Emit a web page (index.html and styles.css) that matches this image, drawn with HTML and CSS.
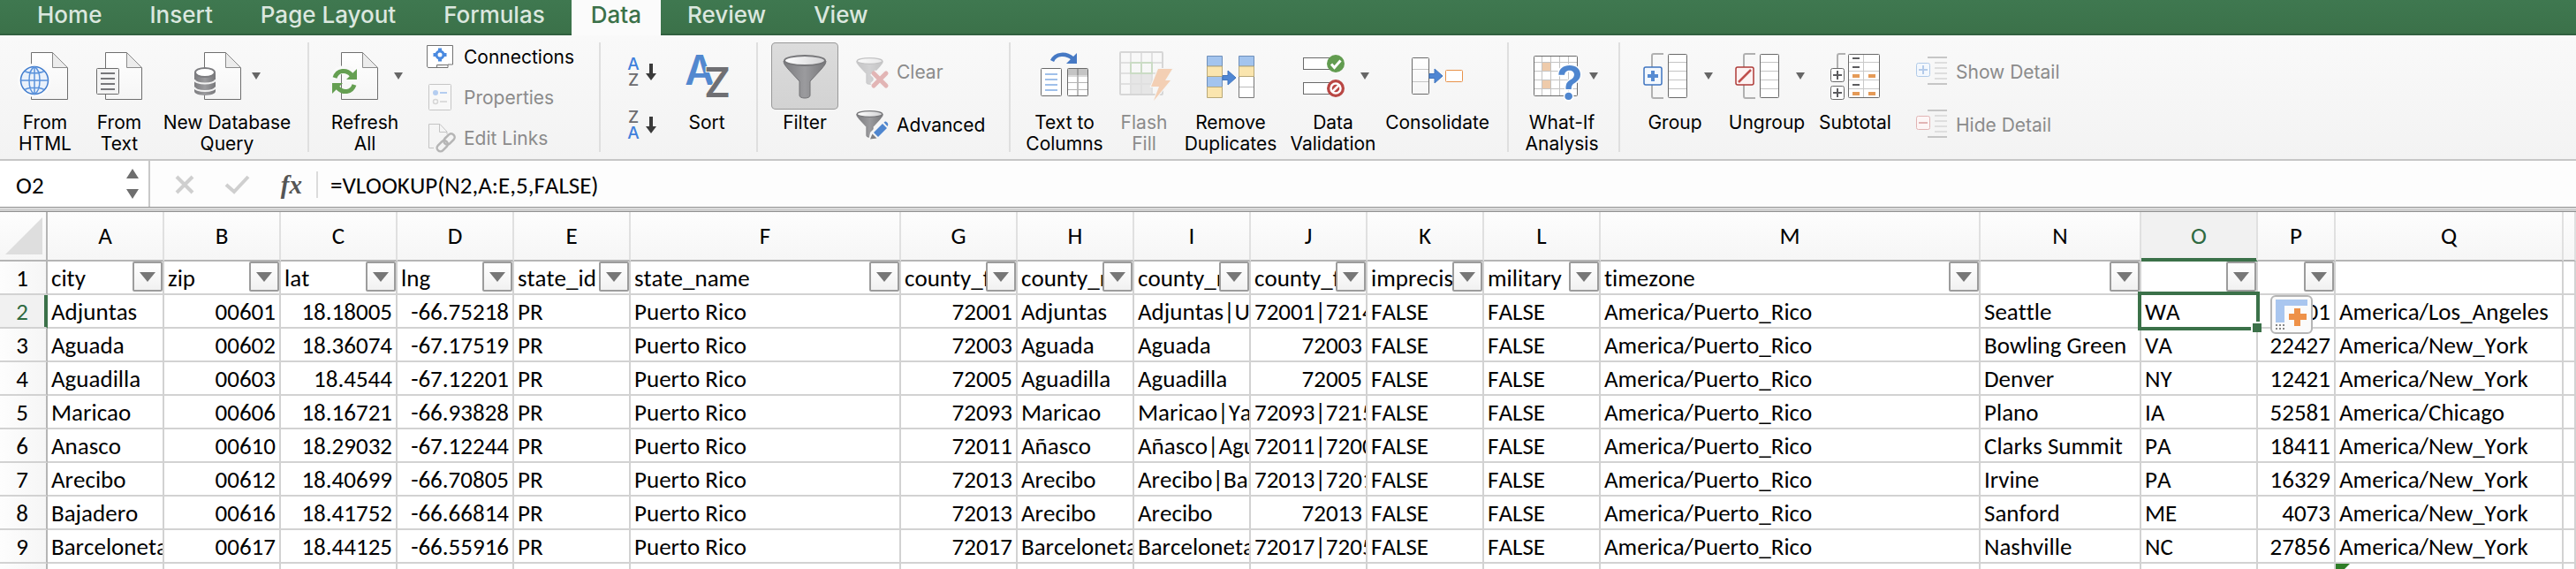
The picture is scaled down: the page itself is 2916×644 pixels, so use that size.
FILE: index.html
```html
<!DOCTYPE html>
<html lang="en">
<head>
<meta charset="utf-8">
<title>Workbook</title>
<link rel="stylesheet" href="styles.css">
</head>
<body>
<svg class="defs" aria-hidden="true">
  <defs>
    <linearGradient id="paper" x1="0" y1="0" x2="0" y2="1"><stop offset="0" stop-color="#fff"/><stop offset="1" stop-color="#f5f5f5"/></linearGradient>
    <linearGradient id="steel" x1="0" y1="0" x2="1" y2="0"><stop offset="0" stop-color="#7c7c7f"/><stop offset=".5" stop-color="#9b9b9e"/><stop offset="1" stop-color="#77777a"/></linearGradient>
    <linearGradient id="bowl" x1="0" y1="0" x2="1" y2="0"><stop offset="0" stop-color="#fff"/><stop offset="1" stop-color="#d2d2d4"/></linearGradient>
    <symbol id="page" viewBox="0 0 44 56" overflow="visible">
      <path d="M1.500 1.500H25.500L42.500 19V54.500H1.500Z" fill="url(#paper)" stroke="#6f6f6f"/>
      <path d="M25.500 1.500V18.500H42.500Z" fill="#ececec" stroke="#8a8a8a"/>
    </symbol>
    <symbol id="funnel" viewBox="0 0 50 52" overflow="visible">
      <path d="M1 8C1 12 4 14 6 17L19 31V47C19 51 31 51 31 47V31L44 17C46 14 49 12 49 8Z" fill="url(#steel)" stroke="#727275"/>
      <ellipse cx="25" cy="7.500" rx="23" ry="5.500" fill="url(#bowl)" stroke="#77777a" stroke-width="2"/>
    </symbol>
    <symbol id="arrow" viewBox="0 0 16 18" overflow="visible">
      <path d="M0 6.500H6V1L15 9L6 17V11.500H0Z" fill="#4f86d3" stroke="#3f74bf"/>
    </symbol>
  </defs>
</svg>

<nav class="tabs">
  <button class="tab">Home</button>
  <button class="tab">Insert</button>
  <button class="tab">Page Layout</button>
  <button class="tab">Formulas</button>
  <button class="tab tab-active">Data</button>
  <button class="tab">Review</button>
  <button class="tab">View</button>
</nav>

<div class="ribbon">
  <div class="group group-first">
    <button class="cmd w84">
      <span class="art"><svg width="60" height="76" viewBox="0 0 60 76">
        <use href="#page" x="13" y="10" width="44" height="56"/>
        <circle cx="18" cy="43" r="19" fill="#fafafa"/>
        <circle cx="18" cy="43" r="15.500" fill="#e9f1fb" stroke="#3f7bcd" stroke-width="1.500"/>
        <path d="M2.500 43H33.500M18 27.500V58.500M18 27.500C10 32 10 54 18 58.500C26 54 26 32 18 27.500M7 32.500C12 35.500 24 35.500 29 32.500M7 53.500C12 50.500 24 50.500 29 53.500" fill="none" stroke="#5b93dc" stroke-width="1.500"/>
      </svg></span>
      <span class="cap">From<br>HTML</span>
    </button>
    <button class="cmd w84">
      <span class="art"><svg width="60" height="76" viewBox="0 0 60 76">
        <use href="#page" x="13" y="10" width="44" height="56"/>
        <rect x="4.500" y="29.500" width="25" height="29" rx="1" fill="#f4f4f4" stroke="#6a6a6a"/>
        <path d="M9 35H25M9 41H25M9 47H25M9 53H25" stroke="#77777a" stroke-width="2"/>
      </svg></span>
      <span class="cap">From<br>Text</span>
    </button>
    <button class="cmd w160">
      <span class="art"><svg width="60" height="76" viewBox="0 0 60 76">
        <use href="#page" x="11" y="10" width="44" height="56"/>
        <path d="M1 34V55C1 61.500 25 61.500 25 55V34Z" fill="url(#steel)"/>
        <path d="M1 42C1 48 25 48 25 42M1 50.500C1 56.500 25 56.500 25 50.500" fill="none" stroke="#f2f2f2" stroke-width="2"/>
        <ellipse cx="13" cy="34" rx="11" ry="5" fill="#fff" stroke="#7d7d80" stroke-width="2"/>
      </svg><i class="drop"></i></span>
      <span class="cap">New Database<br>Query</span>
    </button>
  </div>

  <div class="group">
    <button class="cmd w100">
      <span class="art"><svg width="70" height="76" viewBox="0 0 70 76">
        <use href="#page" x="15" y="10" width="44" height="56"/>
        <path d="M8 41C10 29 24 28 30 36" fill="none" stroke="#fafafa" stroke-width="9"/>
        <path d="M9 40C12 31 22 30 28 37" fill="none" stroke="#659f52" stroke-width="5"/>
        <path d="M34 30V42H22Z" fill="#659f52"/>
        <path d="M31 48C28 57 18 58 12 51" fill="none" stroke="#659f52" stroke-width="5"/>
        <path d="M6 58V46H18Z" fill="#659f52"/>
      </svg><i class="drop"></i></span>
      <span class="cap">Refresh<br>All</span>
    </button>
    <div class="stack three">
      <button class="mini"><svg width="34" height="32" viewBox="0 0 34 32">
        <path d="M.5 3.500H29.500V25H24V28.500H1.500L.5 27Z" fill="#fff" stroke="#727272"/>
        <path d="M11.500 28V25.500H24" fill="#eee" stroke="#727272"/>
        <circle cx="15" cy="14" r="4" fill="#fff" stroke="#4a8ae0" stroke-width="3"/>
        <path d="M13 8H17M13 20H17M9 12V16M21 12V16" stroke="#4a8ae0" stroke-width="3"/>
      </svg>Connections</button>
      <button class="mini off" disabled><svg width="34" height="32" viewBox="0 0 34 32">
        <rect x="2.500" y="1.500" width="25" height="29" rx="1" fill="#f8f8f8" stroke="#c6c6c6"/>
        <circle cx="10" cy="11" r="3" fill="#b4cdf0"/><path d="M15 11H23" stroke="#b4cdf0" stroke-width="2"/>
        <circle cx="10" cy="21" r="2.500" fill="none" stroke="#d6d6d6" stroke-width="1.500"/><path d="M15 21H23" stroke="#dcdcdc" stroke-width="2"/>
      </svg>Properties</button>
      <button class="mini off" disabled><svg width="34" height="32" viewBox="0 0 34 32">
        <path d="M8 27.500H2.500V.5H15L23 9V12M14.500.5V9.500H23" fill="none" stroke="#c4c4c4"/>
        <g fill="none" stroke="#b5b5b5" stroke-width="2.500" transform="rotate(-45 22 21)"><rect x="9" y="17" width="14" height="8" rx="4"/><rect x="20" y="17" width="14" height="8" rx="4"/></g>
      </svg>Edit Links</button>
    </div>
  </div>

  <div class="group group-sort">
    <div class="stack two">
      <button class="mini" aria-label="Sort ascending"><svg width="34" height="36" viewBox="0 0 34 36">
        <text x="6" y="16" class="az az-blue">A</text><text x="6" y="34" class="az">Z</text>
        <path d="M24 9H28V20H32L26 28L20 20H24Z" fill="#3a3a3a"/>
      </svg></button>
      <button class="mini" aria-label="Sort descending"><svg width="34" height="36" viewBox="0 0 34 36">
        <text x="6" y="16" class="az">Z</text><text x="6" y="34" class="az az-blue">A</text>
        <path d="M24 9H28V20H32L26 28L20 20H24Z" fill="#3a3a3a"/>
      </svg></button>
    </div>
    <button class="cmd w80">
      <span class="art"><svg width="52" height="76" viewBox="0 0 52 76">
        <text x="18" y="48" class="sort-a">A</text>
        <text x="38" y="62" class="sort-z">Z</text>
      </svg></span>
      <span class="cap">Sort</span>
    </button>
  </div>

  <div class="group group-filter">
    <button class="cmd w76">
      <span class="art pressed"><svg width="76" height="76" viewBox="0 0 76 76"><use href="#funnel" x="13" y="13" width="50" height="52"/></svg></span>
      <span class="cap">Filter</span>
    </button>
    <div class="stack two">
      <button class="mini off" disabled><svg width="38" height="38" viewBox="0 0 38 38">
        <g opacity=".4"><use href="#funnel" x="0" y="2" width="31" height="33"/></g>
        <path d="M19 20L34 35M34 20L19 35" stroke="#f5f5f5" stroke-width="8"/>
        <path d="M20 21L34 35M34 21L20 35" stroke="#e2b5b5" stroke-width="5" stroke-linecap="round"/>
      </svg>Clear</button>
      <button class="mini"><svg width="38" height="38" viewBox="0 0 38 38">
        <use href="#funnel" x="0" y="2" width="31" height="33"/>
        <path d="M14 38L16 28L31 13L38 19L23 35Z" fill="#f5f5f5"/>
        <path d="M20 28L30 18L35 23L25 33Z" fill="#4f86cf"/>
        <path d="M31.500 16.500L33 15.500C35 15.500 37 18 36 20L35.500 21Z" fill="#4f86cf"/>
        <path d="M16 35.500L18.500 29.500L23.500 34.500Z" fill="#808083"/>
      </svg>Advanced</button>
    </div>
  </div>

  <div class="group group-tools">
    <button class="cmd w100">
      <span class="art"><svg width="60" height="76" viewBox="0 0 60 76">
        <path d="M16 21C20 12 32 12 39 18" fill="none" stroke="#4679c4" stroke-width="4.500"/><path d="M44 12V24H32Z" fill="#4679c4"/>
        <rect x="3.500" y="29.500" width="23" height="31" rx="1" fill="#fff" stroke="#6a6a6a"/>
        <path d="M8 36H22M8 42H22M8 48H22M8 54H22" stroke="#9fc0ea" stroke-width="2"/>
        <rect x="33.500" y="29.500" width="23" height="31" rx="1" fill="#fff"/>
        <path d="M34 30H56V37H34Z" fill="#c4c4c4"/>
        <path d="M45 30V60" stroke="#777"/><path d="M34 38H56M34 45.500H56M34 53.500H56" stroke="#b5b5b5"/>
        <rect x="33.500" y="29.500" width="23" height="31" rx="1" fill="none" stroke="#6a6a6a"/>
      </svg></span>
      <span class="cap">Text to<br>Columns</span>
    </button>
    <button class="cmd w80 off" disabled>
      <span class="art"><svg width="64" height="76" viewBox="0 0 64 76">
        <path d="M17 35H41V59H17Z" fill="#e6e6e6"/>
        <path d="M17 11V59M29 11V59M41 11V59M5 23H53M5 35H53M5 47H53" stroke="#e0e0e0" stroke-width="2"/>
        <rect x="5" y="11" width="48" height="48" rx="1" fill="none" stroke="#d6d6d6" stroke-width="2"/>
        <path d="M17 23H41V35H17ZM29 23V35" fill="none" stroke="#cbdcc5" stroke-width="2"/>
        <path d="M48 30H64L56 43H62L43 66L49 50H40Z" fill="#f3cfb4" stroke="#f5f5f5" stroke-width="2" paint-order="stroke"/>
      </svg></span>
      <span class="cap">Flash<br>Fill</span>
    </button>
    <button class="cmd w116">
      <span class="art"><svg width="60" height="76" viewBox="0 0 60 76">
        <path d="M3.500 15.500H20.500V27H3.500ZM3.500 38.500H20.500V50.500H3.500Z" fill="#a3c4ee" stroke="#6f8fba"/>
        <path d="M3.500 27H20.500V38.500H3.500ZM3.500 50.500H20.500V62.500H3.500Z" fill="#fae5ae" stroke="#b8a878"/>
        <path d="M39.500 38.500H56.500V62.500H39.500Z" fill="#fff" stroke="#777"/><path d="M40 50.500H56" stroke="#bbb"/>
        <path d="M39.500 15.500H56.500V27H39.500Z" fill="#a3c4ee" stroke="#6f8fba"/>
        <path d="M39.500 27H56.500V38.500H39.500Z" fill="#fae5ae" stroke="#b8a878"/>
        <use href="#arrow" x="21" y="31" width="16" height="18"/>
      </svg></span>
      <span class="cap">Remove<br>Duplicates</span>
    </button>
    <button class="cmd w116">
      <span class="art"><svg width="66" height="76" viewBox="0 0 66 76">
        <rect x="7.500" y="17.500" width="34" height="13" fill="#fff" stroke="#6a6a6a"/>
        <rect x="7.500" y="45.500" width="34" height="13" fill="#fff" stroke="#6a6a6a"/>
        <circle cx="44" cy="24" r="10" fill="#629c50"/><path d="M39 24.500L42.500 28.500L49.500 20.500" fill="none" stroke="#fff" stroke-width="3"/>
        <circle cx="44" cy="52" r="10" fill="#b94744"/><circle cx="44" cy="52" r="5.500" fill="none" stroke="#fff" stroke-width="2.500"/><path d="M40 56L48 48" stroke="#fff" stroke-width="2.500"/>
      </svg><i class="drop"></i></span>
      <span class="cap">Data<br>Validation</span>
    </button>
    <button class="cmd w120">
      <span class="art"><svg width="60" height="76" viewBox="0 0 60 76">
        <rect x="1.500" y="17.500" width="19" height="41" rx="1" fill="url(#paper)" stroke="#6a6a6a"/>
        <path d="M2 30.500H20M2 44.500H20" stroke="#c4c4c4"/>
        <use href="#arrow" x="21" y="29" width="16" height="18"/>
        <rect x="39.500" y="31.500" width="19" height="13" rx="1" fill="#fff" stroke="#e8924a"/>
      </svg></span>
      <span class="cap">Consolidate</span>
    </button>
  </div>

  <div class="group">
    <button class="cmd w100">
      <span class="art"><svg width="66" height="76" viewBox="0 0 66 76">
        <rect x="9.500" y="15.500" width="49" height="45" rx="1" fill="#fff"/>
        <path d="M18.500 16V60M28.500 16V60M38.500 16V60M48.500 16V60M10 22.500H58M10 32.500H58M10 42.500H58M10 52.500H58" stroke="#c4c4c4"/>
        <path d="M19 23H28V32H19ZM19 43H28V52H19Z" fill="#eecbab"/>
        <rect x="9.500" y="15.500" width="49" height="45" rx="1" fill="none" stroke="#6a6a6a"/>
        <text x="50" y="65" class="ask">?</text>
      </svg><i class="drop"></i></span>
      <span class="cap">What-If<br>Analysis</span>
    </button>
  </div>

  <div class="group group-outline">
    <button class="cmd w104">
      <span class="art"><svg width="70" height="76" viewBox="0 0 70 76">
        <path d="M30 13H19Q17 13 17 15V61Q17 63 19 63H30" fill="none" stroke="#b0b0b0" stroke-width="2"/>
        <rect x="8" y="28" width="20" height="20" rx="2" fill="#f3f8fe" stroke="#3f74c0" stroke-width="1.500"/>
        <path d="M12 38H24M18 32V44" stroke="#568bd2" stroke-width="4"/>
        <rect x="35.500" y="13.500" width="21" height="49" rx="1" fill="#fff" stroke="#6a6a6a"/>
        <path d="M36 22.500H56M36 32.500H56M36 42.500H56M36 52.500H56" stroke="#c4c4c4"/>
      </svg><i class="drop"></i></span>
      <span class="cap">Group</span>
    </button>
    <button class="cmd w104">
      <span class="art"><svg width="70" height="76" viewBox="0 0 70 76">
        <path d="M30 13H19Q17 13 17 15V61Q17 63 19 63H30" fill="none" stroke="#b0b0b0" stroke-width="2"/>
        <rect x="8" y="28" width="20" height="20" rx="2" fill="#fdf3f3" stroke="#ae3b38" stroke-width="1.500"/>
        <path d="M11 45L25 31" stroke="#c0504d" stroke-width="2.500"/>
        <rect x="35.500" y="13.500" width="21" height="49" rx="1" fill="#fff" stroke="#6a6a6a"/>
        <path d="M36 22.500H56M36 32.500H56M36 42.500H56M36 52.500H56" stroke="#c4c4c4"/>
      </svg><i class="drop"></i></span>
      <span class="cap">Ungroup</span>
    </button>
    <button class="cmd w96">
      <span class="art"><svg width="60" height="76" viewBox="0 0 60 76">
        <path d="M19 13H12Q10 13 10 15V30" fill="none" stroke="#b0b0b0" stroke-width="2"/>
        <rect x="2.500" y="29.500" width="15" height="15" rx="2" fill="#fff" stroke="#6a6a6a"/>
        <rect x="2.500" y="49.500" width="15" height="15" rx="2" fill="#fff" stroke="#6a6a6a"/>
        <path d="M5 37H15M10 32V42M5 57H15M10 52V62" stroke="#5c5c5f" stroke-width="2"/>
        <rect x="22.500" y="13.500" width="35" height="49" rx="1" fill="#fff" stroke="#6a6a6a"/>
        <path d="M39.500 14V62M23 22.500H57M23 32.500H57M23 42.500H57M23 52.500H57" stroke="#c9c9c9"/>
        <path d="M27 18H35M27 28H35M27 48H35" stroke="#5c5c5f" stroke-width="2"/>
        <path d="M27 38H35M45 38H53M27 58H35M45 58H53" stroke="#e59a57" stroke-width="4"/>
      </svg></span>
      <span class="cap">Subtotal</span>
    </button>
    <div class="stack two">
      <button class="mini off" disabled><svg width="38" height="38" viewBox="0 0 38 38">
        <path d="M14 3H36M14 33H36" stroke="#c6c6c6" stroke-width="2"/><path d="M22 9H36M22 15H36M22 21H36M22 27H36" stroke="#dedede" stroke-width="2"/>
        <rect x="1.500" y="9.500" width="15" height="15" rx="2" fill="#f4f8fd" stroke="#b0cae8"/><path d="M4 17H14M9 12V22" stroke="#b4cbea" stroke-width="2"/>
      </svg>Show Detail</button>
      <button class="mini off" disabled><svg width="38" height="38" viewBox="0 0 38 38">
        <path d="M14 3H36M14 33H36" stroke="#c6c6c6" stroke-width="2"/><path d="M22 9H36M22 15H36M22 21H36M22 27H36" stroke="#dedede" stroke-width="2"/>
        <rect x="1.500" y="9.500" width="15" height="15" rx="2" fill="#fdf6f6" stroke="#e2b4b4"/><path d="M4 17H14" stroke="#e2b4b4" stroke-width="2"/>
      </svg>Hide Detail</button>
    </div>
  </div>
</div>

<div class="formula-bar">
  <div class="name-box">
    <input class="name-input" aria-label="Name box" value="O2">
    <svg width="16" height="36" viewBox="0 0 16 36"><path d="M8 1L15 12H1ZM1 24H15L8 35Z" fill="#6e6e6e"/></svg>
  </div>
  <div class="bar-tools">
    <button class="bar-btn" aria-label="Cancel"><svg width="24" height="24" viewBox="0 0 24 24"><path d="M3 3L21 21M21 3L3 21" stroke="#cfcfcf" stroke-width="4"/></svg></button>
    <button class="bar-btn" aria-label="Enter"><svg width="30" height="24" viewBox="0 0 30 24"><path d="M2 12L11 20L27 3" fill="none" stroke="#cfcfcf" stroke-width="4"/></svg></button>
    <button class="bar-btn fx" aria-label="Insert function">fx</button>
  </div>
  <input class="formula-input" aria-label="Formula" value="=VLOOKUP(N2,A:E,5,FALSE)">
</div>

<main class="sheet">
<table class="grid">
  <colgroup>
    <col class="c-row"><col class="c-std"><col class="c-std"><col class="c-std"><col class="c-std"><col class="c-std"><col class="c-f">
    <col class="c-std"><col class="c-std"><col class="c-std"><col class="c-std"><col class="c-std"><col class="c-std"><col class="c-m">
    <col class="c-n"><col class="c-std"><col class="c-p"><col class="c-q"><col>
  </colgroup>
  <thead>
    <tr><th class="corner"><svg width="42" height="42" viewBox="0 0 42 42"><path d="M42 0V42H0Z" fill="#dedede"/></svg></th><th>A</th><th>B</th><th>C</th><th>D</th><th>E</th><th>F</th><th>G</th><th>H</th><th>I</th><th>J</th><th>K</th><th>L</th><th>M</th><th>N</th><th class="col-on">O</th><th>P</th><th>Q</th><th></th></tr>
  </thead>
  <tbody>
    <tr class="fields"><th>1</th><td>city<button class="flt" aria-label="Filter city"></button></td><td>zip<button class="flt" aria-label="Filter zip"></button></td><td>lat<button class="flt" aria-label="Filter lat"></button></td><td>lng<button class="flt" aria-label="Filter lng"></button></td><td>state_id<button class="flt" aria-label="Filter state id"></button></td><td>state_name<button class="flt" aria-label="Filter state name"></button></td><td>county_fips<button class="flt" aria-label="Filter county fips"></button></td><td>county_name<button class="flt" aria-label="Filter county name"></button></td><td>county_names_all<button class="flt" aria-label="Filter county names"></button></td><td>county_fips_all<button class="flt" aria-label="Filter all county fips"></button></td><td>imprecise<button class="flt" aria-label="Filter imprecise"></button></td><td>military<button class="flt" aria-label="Filter military"></button></td><td>timezone<button class="flt" aria-label="Filter timezone"></button></td><td><button class="flt" aria-label="Filter column N"></button></td><td><button class="flt" aria-label="Filter column O"></button></td><td><button class="flt" aria-label="Filter column P"></button></td><td></td><td></td></tr>
    <tr><th class="row-on">2</th><td>Adjuntas</td><td class="n">00601</td><td class="n">18.18005</td><td class="n">-66.75218</td><td>PR</td><td>Puerto Rico</td><td class="n">72001</td><td>Adjuntas</td><td>Adjuntas|Utuado</td><td>72001|72141</td><td>FALSE</td><td>FALSE</td><td>America/Puerto_Rico</td><td>Seattle</td><td class="picked">WA<span class="handle"></span></td><td class="n tagged">98101<button class="tag" aria-label="Auto fill options"><svg width="38" height="36" viewBox="0 0 38 36"><path d="M1 1H37V8H11V27H1Z" fill="#a9c6ef"/><path d="M22 11H29V17H36V24H29V31H22V24H16V17H22Z" fill="#ee9148"/><path d="M1 30H3M5 30H7M9 30H11M1 34H3M5 34H7M9 34H11" stroke="#888" stroke-width="2"/></svg></button></td><td>America/Los_Angeles</td><td></td></tr>
    <tr><th>3</th><td>Aguada</td><td class="n">00602</td><td class="n">18.36074</td><td class="n">-67.17519</td><td>PR</td><td>Puerto Rico</td><td class="n">72003</td><td>Aguada</td><td>Aguada</td><td class="n">72003</td><td>FALSE</td><td>FALSE</td><td>America/Puerto_Rico</td><td>Bowling Green</td><td>VA</td><td class="n">22427</td><td>America/New_York</td><td></td></tr>
    <tr><th>4</th><td>Aguadilla</td><td class="n">00603</td><td class="n">18.4544</td><td class="n">-67.12201</td><td>PR</td><td>Puerto Rico</td><td class="n">72005</td><td>Aguadilla</td><td>Aguadilla</td><td class="n">72005</td><td>FALSE</td><td>FALSE</td><td>America/Puerto_Rico</td><td>Denver</td><td>NY</td><td class="n">12421</td><td>America/New_York</td><td></td></tr>
    <tr><th>5</th><td>Maricao</td><td class="n">00606</td><td class="n">18.16721</td><td class="n">-66.93828</td><td>PR</td><td>Puerto Rico</td><td class="n">72093</td><td>Maricao</td><td>Maricao|Yauco</td><td>72093|72153</td><td>FALSE</td><td>FALSE</td><td>America/Puerto_Rico</td><td>Plano</td><td>IA</td><td class="n">52581</td><td>America/Chicago</td><td></td></tr>
    <tr><th>6</th><td>Anasco</td><td class="n">00610</td><td class="n">18.29032</td><td class="n">-67.12244</td><td>PR</td><td>Puerto Rico</td><td class="n">72011</td><td>Añasco</td><td>Añasco|Aguada</td><td>72011|72003</td><td>FALSE</td><td>FALSE</td><td>America/Puerto_Rico</td><td>Clarks Summit</td><td>PA</td><td class="n">18411</td><td>America/New_York</td><td></td></tr>
    <tr><th>7</th><td>Arecibo</td><td class="n">00612</td><td class="n">18.40699</td><td class="n">-66.70805</td><td>PR</td><td>Puerto Rico</td><td class="n">72013</td><td>Arecibo</td><td>Arecibo|Barceloneta</td><td>72013|72017</td><td>FALSE</td><td>FALSE</td><td>America/Puerto_Rico</td><td>Irvine</td><td>PA</td><td class="n">16329</td><td>America/New_York</td><td></td></tr>
    <tr><th>8</th><td>Bajadero</td><td class="n">00616</td><td class="n">18.41752</td><td class="n">-66.66814</td><td>PR</td><td>Puerto Rico</td><td class="n">72013</td><td>Arecibo</td><td>Arecibo</td><td class="n">72013</td><td>FALSE</td><td>FALSE</td><td>America/Puerto_Rico</td><td>Sanford</td><td>ME</td><td class="n">4073</td><td>America/New_York</td><td></td></tr>
    <tr><th>9</th><td>Barceloneta</td><td class="n">00617</td><td class="n">18.44125</td><td class="n">-66.55916</td><td>PR</td><td>Puerto Rico</td><td class="n">72017</td><td>Barceloneta</td><td>Barceloneta</td><td>72017|72054</td><td>FALSE</td><td>FALSE</td><td>America/Puerto_Rico</td><td>Nashville</td><td>NC</td><td class="n">27856</td><td>America/New_York</td><td></td></tr>
    <tr><th></th><td></td><td></td><td></td><td></td><td></td><td></td><td></td><td></td><td></td><td></td><td></td><td></td><td></td><td></td><td></td><td></td><td class="warn"></td><td></td></tr>
  </tbody>
</table>
</main>
</body>
</html>
```
FILE: styles.css
```css
* { box-sizing: border-box; }

body {
  margin: 0;
  height: 100vh;
  overflow: hidden;
  display: flex;
  flex-direction: column;
  background: #fff;
  color: #000;
  font-family: Inter, "Liberation Sans", sans-serif;
}

button, input {
  font: inherit;
  color: inherit;
  background: none;
  border: 0;
  padding: 0;
  margin: 0;
}

svg { display: block; flex: none; overflow: visible; }
.defs { position: absolute; width: 0; height: 0; }

/* Tab strip */
.tabs {
  flex: none;
  display: flex;
  height: 40px;
  padding-left: 15px;
  background: linear-gradient(#3f7850, #3b7149);
  box-shadow: inset 0 -2px #316040;
  font-size: 26px;
  font-weight: 500;
}
.tab { padding: 0 27px 6px; color: #dbe7df; line-height: 34px; }
.tab-active {
  margin: 0 3px;
  padding: 0 22px 6px;
  background: #fbfbfb;
  color: #3b7149;
}

/* Ribbon */
.ribbon {
  flex: none;
  display: flex;
  height: 142px;
  border-bottom: 2px solid #c6c6c6;
  background: linear-gradient(#f9f9f9, #f3f3f3);
  font-size: 21px;
}
.group { display: flex; position: relative; padding: 0 16px 0 10px; }
.group::after {
  content: "";
  position: absolute;
  right: 0;
  top: 8px;
  bottom: 8px;
  width: 2px;
  background: #dfdfdf;
}
.group-outline::after { display: none; }
.group-first { padding: 0 13px 0 9px; }
.group-first + .group { padding-left: 13px; width: 330px; }
.group-sort { padding-left: 31px; width: 178px; }
.group-filter { padding-left: 15px; width: 286px; }
.group-tools { padding: 0 21px 0 11px; }

.cmd {
  display: flex;
  flex-direction: column;
  align-items: center;
  flex: none;
  gap: 3px;
  padding-top: 8px;
}
.art { display: flex; align-items: center; height: 76px; }
.pressed {
  width: 76px;
  border-radius: 5px;
  background: linear-gradient(#dcdcdc, #d2d2d2);
  box-shadow: inset 0 0 0 1px #999;
}
.drop {
  margin: 0 0 0 6px;
  border: 5px solid transparent;
  border-top: 8px solid #666;
  border-bottom: 0;
}
.cap { line-height: 24px; text-align: center; white-space: nowrap; }
.off { color: #8b8b8b; }

.w76 { width: 76px; }
.w80 { width: 80px; }
.w84 { width: 84px; }
.w96 { width: 96px; }
.w100 { width: 100px; }
.w104 { width: 104px; }
.w116 { width: 116px; }
.w120 { width: 120px; }
.w160 { width: 160px; }

.stack { display: flex; flex-direction: column; margin-left: 20px; }
.group-sort .stack { margin: 0 15px 0 0; }
.three { padding-top: 1px; }
.two { padding-top: 11px; }
.mini { display: flex; align-items: center; gap: 8px; white-space: nowrap; }
.three .mini { height: 46px; }
.two .mini { height: 60px; }

.az { font-size: 19px; font-weight: 500; text-anchor: middle; fill: #6b6b6e; }
.az-blue { fill: #3f80dc; }
.sort-a, .sort-z { font-size: 46px; font-weight: 600; text-anchor: middle; }
.sort-a { fill: #5288cf; }
.sort-z { fill: #6f6f73; stroke: #f5f5f5; stroke-width: 2px; paint-order: stroke; }
.ask {
  font-size: 54px;
  font-weight: 600;
  text-anchor: middle;
  fill: #4f86cf;
  stroke: #fff;
  stroke-width: 3px;
  paint-order: stroke;
}

/* Formula bar */
.formula-bar {
  flex: none;
  display: flex;
  height: 58px;
  padding-bottom: 6px;
  background: linear-gradient(#fdfdfd 0 52px, #929292 52px 53px, #e6e6e6 53px 54px, #d0d0d0 54px 57px, #929292 57px 58px);
  font-family: Carlito, Calibri, Lato, sans-serif;
  font-size: 27px;
  font-kerning: none;
}
.name-box {
  display: flex;
  align-items: center;
  width: 170px;
  padding: 0 10px 0 18px;
  border-right: 2px solid #c9c9c9;
  background: #fff;
}
.name-input { flex: 1; min-width: 0; padding-top: 2px; }
.bar-tools {
  display: flex;
  align-items: center;
  justify-content: space-between;
  width: 190px;
  margin: 12px 0 10px;
  padding: 0 16px 0 27px;
  border-right: 2px solid #dcdcdc;
}
.fx { font: italic 700 29px/30px "Liberation Serif", serif; color: #555; }
.formula-input { flex: 1; min-width: 0; padding: 2px 0 0 14px; }

/* Sheet */
.sheet { flex: 1; min-height: 0; overflow: hidden; }
.grid {
  width: 100%;
  table-layout: fixed;
  border-collapse: separate;
  border-spacing: 0;
  font-family: Carlito, Calibri, Lato, sans-serif;
  font-size: 27px;
  font-kerning: none;
  font-variant-ligatures: none;
  line-height: 34px;
}
.c-row { width: 54px; }
.c-std { width: 132px; }
.c-f { width: 306px; }
.c-m { width: 430px; }
.c-n { width: 182px; }
.c-p { width: 88px; }
.c-q { width: 258px; }

.grid th, .grid td {
  position: relative;
  height: 38px;
  padding: 2px 4px 0;
  border-right: 2px solid #d2d2d2;
  border-bottom: 2px solid #d2d2d2;
  overflow: hidden;
  white-space: nowrap;
  font-weight: 400;
  text-align: left;
}
.grid .n { text-align: right; }
.grid thead th {
  height: 56px;
  padding-top: 0;
  border-right-color: #e0e0e0;
  border-bottom-color: #b5b5b5;
  background: linear-gradient(#fdfdfd, #f6f6f6);
  text-align: center;
}
.grid tbody th {
  padding-right: 6px;
  border-right-color: #b5b5b5;
  background: linear-gradient(90deg, #fdfdfd, #f6f6f6);
  text-align: center;
}
.grid thead .corner { padding: 0 4px 0 6px; border-right-color: #b5b5b5; }
.grid thead .col-on { background: #f1f1f1; color: #2f6a41; box-shadow: inset 0 -2px #3b7149; border-bottom-color: #3b7149; }
.grid tbody .row-on { background: #f1f1f1; color: #2f6a41; box-shadow: inset -2px 0 #3b7149; border-right-color: #3b7149; }

.flt {
  position: absolute;
  top: 0;
  right: 0;
  width: 34px;
  height: 34px;
  border: 2px solid #9c9c9c;
  border-radius: 2px;
  background: linear-gradient(#fff, #f1f1f1);
}
.flt::before {
  content: "";
  display: block;
  width: 0;
  margin: 0 auto;
  border: 9px solid transparent;
  border-top: 11px solid #777;
  border-bottom: 0;
}

.grid .picked, .grid .tagged { overflow: visible; }
.picked::before {
  content: "";
  position: absolute;
  inset: -4px;
  border: 4px solid #3b7149;
  z-index: 1;
}
.handle {
  position: absolute;
  right: -6px;
  bottom: -6px;
  width: 12px;
  height: 12px;
  border: solid #fff;
  border-width: 2px 0 0 2px;
  background: #3b7149;
  z-index: 2;
}
.tag {
  position: absolute;
  left: 14px;
  top: 0;
  width: 48px;
  height: 44px;
  padding: 2px 3px;
  border: 2px solid #b5b5b5;
  border-radius: 6px;
  background: #fbfbfb;
  z-index: 3;
}
.warn::before {
  content: "";
  position: absolute;
  left: 0;
  top: 0;
  border: 8px solid transparent;
  border-top-color: #2f7d27;
  border-left-color: #2f7d27;
}
```
